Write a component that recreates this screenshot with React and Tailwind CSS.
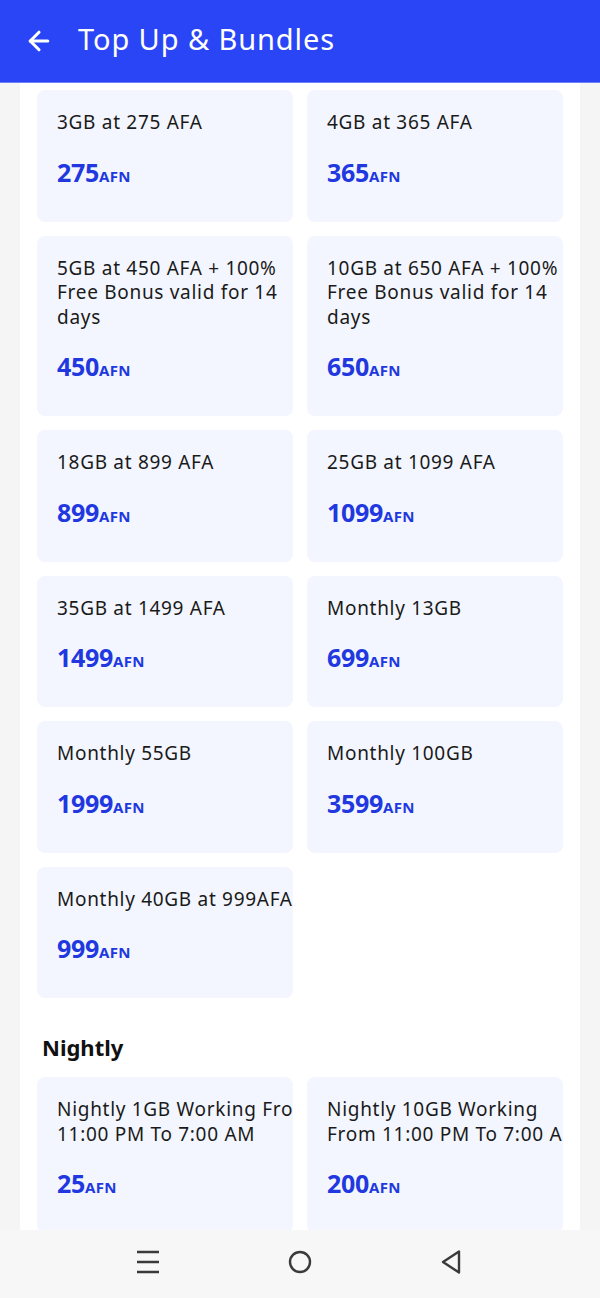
import { ArrowLeft } from 'lucide-react';

const bundles = [
    { title: '3GB at 275 AFA', price: '275' },
    { title: '4GB at 365 AFA', price: '365' },
    { title: '5GB at 450 AFA + 100% Free Bonus valid for 14 days', price: '450' },
    { title: '10GB at 650 AFA + 100% Free Bonus valid for 14 days', price: '650' },
    { title: '18GB at 899 AFA', price: '899' },
    { title: '25GB at 1099 AFA', price: '1099' },
    { title: '35GB at 1499 AFA', price: '1499' },
    { title: 'Monthly 13GB', price: '699' },
    { title: 'Monthly 55GB', price: '1999' },
    { title: 'Monthly 100GB', price: '3599' },
    { title: 'Monthly 40GB at 999AFA', price: '999' },
];

const nightly = [
    { title: 'Nightly 1GB Working From 11:00 PM To 7:00 AM', price: '25' },
    { title: 'Nightly 10GB Working From 11:00 PM To 7:00 AM', price: '200' },
];

const BundleCard = ({ title, price }) => (
    <div className="rounded-[8px] bg-[#f3f6fe] pt-5 pl-5 pb-[31px] overflow-hidden">
        <p className="w-[258px] text-[19px] leading-[24.5px] tracking-[0.7px] text-[#1a1a1a]">
            {title}
        </p>
        <div className="mt-[22px] flex items-baseline leading-[30px] font-bold text-[#2138e0]">
            <span className="text-[25px] tracking-[-0.3px]">{price}</span>
            <span className="text-[15px] tracking-[0.3px]">AFN</span>
        </div>
    </div>
);

const App = () => {
    return (
        <div
            className="w-full h-[1298px] flex flex-col bg-[#f5f5f5] overflow-hidden"
            style={{ fontFamily: '"Noto Sans", "Open Sans", sans-serif' }}
        >
            {/* Header */}
            <div className="h-[83px] flex-shrink-0 bg-[#2a45f5] flex items-center pl-[24px] gap-[24px] border-b border-[#6d80f7]">
                <ArrowLeft size={30} strokeWidth={2.5} className="text-white" />
                <h1 className="text-[29px] leading-[36px] pb-[4px] text-white tracking-[0.9px]">Top Up &amp; Bundles</h1>
            </div>

            {/* Bundle list */}
            <div className="flex-1 overflow-hidden mx-[20px] bg-white px-[17px] pt-[7px]">
                <div className="grid grid-cols-2 gap-[14px]">
                    {bundles.map((b) => (
                        <BundleCard key={b.title} title={b.title} price={b.price} />
                    ))}
                </div>

                <h2 className="mt-[32px] mb-[13px] pl-[5px] text-[22px] leading-[34px] font-bold text-[#111]">
                    Nightly
                </h2>

                <div className="grid grid-cols-2 gap-[14px]">
                    {nightly.map((b) => (
                        <BundleCard key={b.title} title={b.title} price={b.price} />
                    ))}
                </div>
            </div>

            {/* Android nav bar */}
            <div className="h-[68px] flex-shrink-0 bg-[#f7f7f7] flex items-center justify-center gap-[128px] pb-[4px]">
                <svg width="24" height="24" viewBox="0 0 24 24" fill="none" stroke="#3a3a3a" strokeWidth="2.4">
                    <path d="M1 2h22M1 12h22M1 22h22" />
                </svg>
                <svg width="24" height="24" viewBox="0 0 24 24" fill="none" stroke="#3a3a3a" strokeWidth="2.4">
                    <circle cx="12" cy="12" r="10" />
                </svg>
                <svg width="24" height="24" viewBox="0 0 24 24" fill="none" stroke="#3a3a3a" strokeWidth="2.4" strokeLinejoin="round">
                    <path d="M19 1.5v21L3 12z" />
                </svg>
            </div>
        </div>
    );
};

export default App;
